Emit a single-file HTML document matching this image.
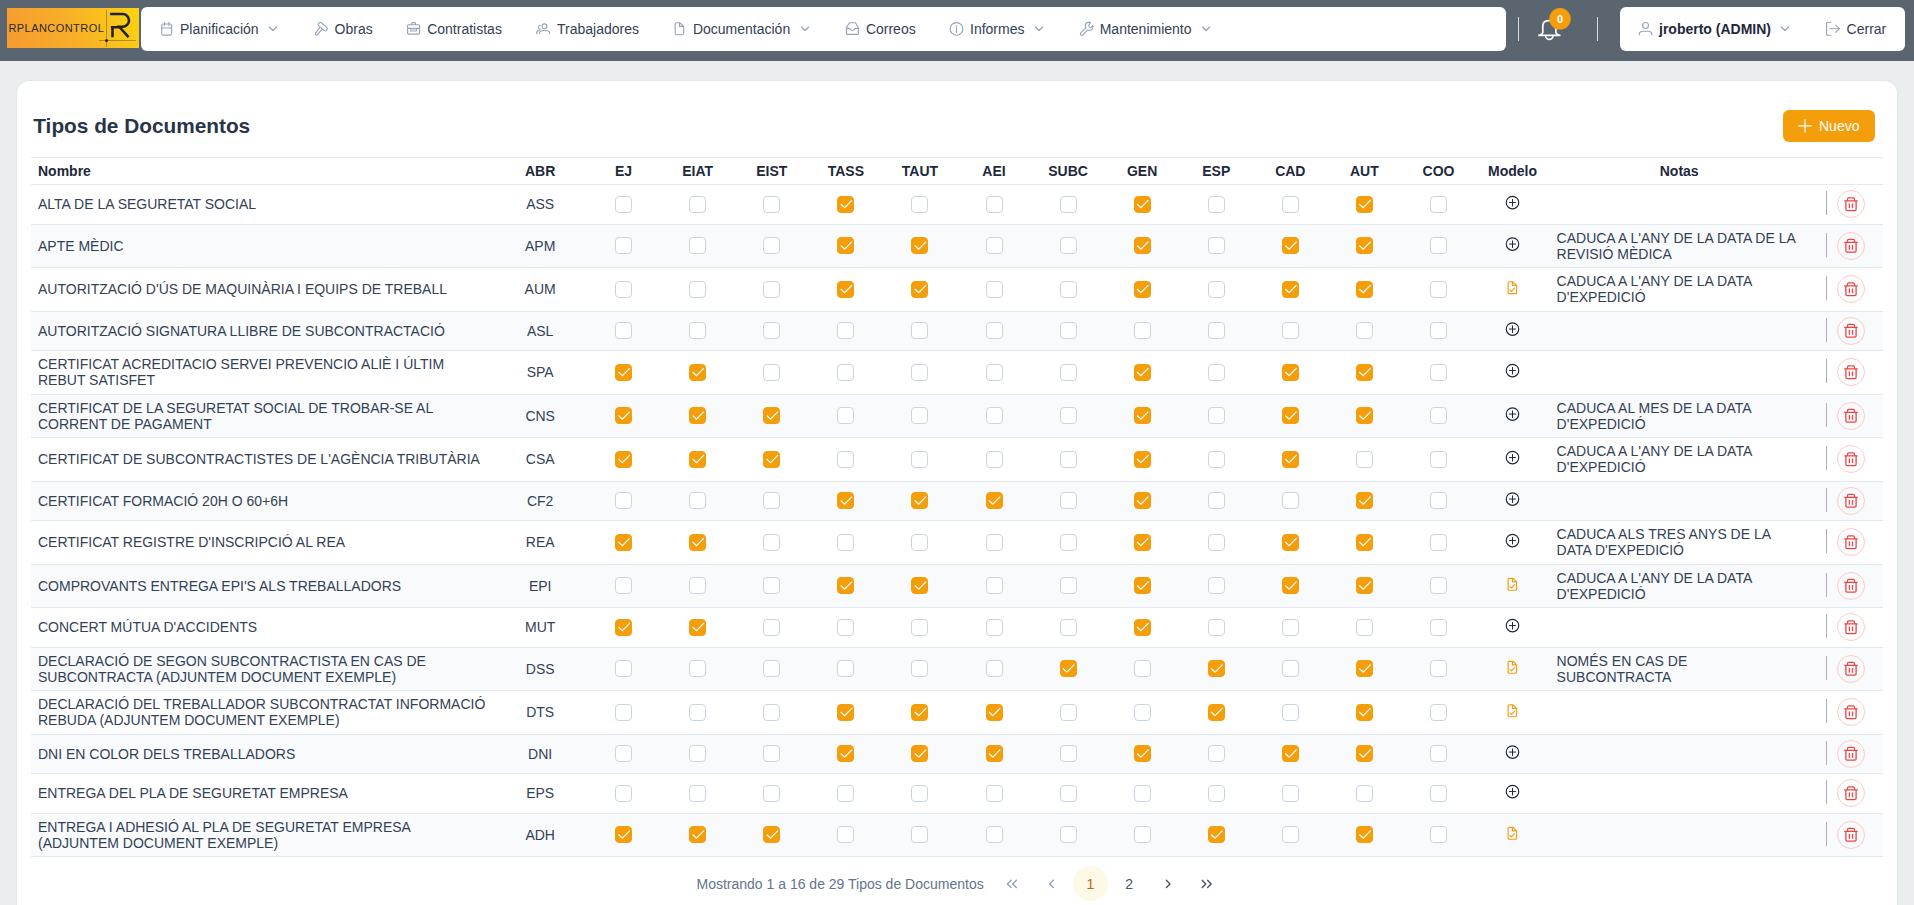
<!DOCTYPE html>
<html><head><meta charset="utf-8"><title>Tipos de Documentos</title>
<style>
*{box-sizing:border-box;margin:0;padding:0}
html,body{width:1914px;height:905px;overflow:hidden}
body{background:#eaeeef;font-family:"Liberation Sans",sans-serif;font-size:14px;color:#334155;position:relative}
.a{position:absolute}
.t{position:absolute;white-space:nowrap;line-height:16px}
svg{position:absolute;overflow:visible}
.nav{left:0;top:0;width:1914px;height:61px;background:#5b6570}
.box{background:#fff;border-radius:6px}
.card{left:17px;top:81px;width:1880px;height:900px;background:#fff;border-radius:12px;box-shadow:0 0 2px rgba(0,0,0,0.10)}
.hl{position:absolute;left:31px;width:1852px;height:1px;background:#e2e8f0}
.row{position:absolute;left:31px;width:1852px}
.st{background:#f8fafc}
.cb{position:absolute;width:17px;height:17px;border:1px solid #cbd5e1;border-radius:4px;background:#fff}
.cb.on{background:#f59e0b;border-color:#f59e0b}
.th{font-weight:bold;color:#1e293b}
</style></head><body>

<div class="a nav"></div>
<div class="a" style="left:7px;top:8px;width:132px;height:40px;background:linear-gradient(65deg,#f59a30 0%,#f8ad2a 45%,#fdd410 100%)">
<div class="t" style="left:1.4px;top:13px;font-size:11px;letter-spacing:0.45px;color:#2a2a2a;line-height:14px">RPLANCONTROL</div>
<div class="a" style="left:99px;top:2px;width:1px;height:37px;background:rgba(40,40,40,0.35)"></div>
<div class="a" style="left:92px;top:32px;width:37px;height:1px;background:rgba(40,40,40,0.35)"></div>
<div class="a" style="left:98.3px;top:31.2px;width:3px;height:3px;border-radius:50%;background:#222"></div>
<svg style="left:0;top:0" width="132" height="40"><path d="M103 6 H115.6 A6.4 6.4 0 0 1 115.6 18.8 H110 M103.9 19.2 H112.5 M105.5 18.2 V29.2 M113 19.6 L121.6 29.2" fill="none" stroke="#222" stroke-width="2.6"/></svg>
</div>
<div class="a box" style="left:141px;top:7px;width:1365px;height:44px"></div>
<div class="t" style="left:180px;top:21px;color:#334155">Planificación</div>
<div class="t" style="left:334.6px;top:21px;color:#334155">Obras</div>
<div class="t" style="left:427.2px;top:21px;color:#334155">Contratistas</div>
<div class="t" style="left:557px;top:21px;color:#334155">Trabajadores</div>
<div class="t" style="left:692.9px;top:21px;color:#334155">Documentación</div>
<div class="t" style="left:865.9px;top:21px;color:#334155">Correos</div>
<div class="t" style="left:970px;top:21px;color:#334155">Informes</div>
<div class="t" style="left:1099.7px;top:21px;color:#334155">Mantenimiento</div>
<div class="a" style="left:1518px;top:17px;width:1px;height:24px;background:#d6dade"></div>
<div class="a" style="left:1597px;top:17px;width:1px;height:24px;background:#d6dade"></div>
<div class="a box" style="left:1620px;top:7px;width:285px;height:44px"></div>
<div class="t" style="left:1659px;top:21px;font-weight:bold;color:#1e293b">jroberto (ADMIN)</div>
<div class="t" style="left:1846.6px;top:21px;color:#334155">Cerrar</div>
<div class="a card"></div>
<div class="t" style="left:33.3px;top:114px;font-size:20.8px;line-height:24px;font-weight:bold;color:#283548">Tipos de Documentos</div>
<div class="a" style="left:1783px;top:110px;width:92px;height:32px;border-radius:6px;background:#f59e0b"></div>
<div class="t" style="left:1819px;top:118px;color:#fff">Nuevo</div>
<div class="hl" style="top:157px"></div>
<div class="hl" style="top:184px"></div>
<div class="t th" style="left:38px;top:163.2px">Nombre</div>
<div class="t th" style="left:493.8px;width:92.76px;text-align:center;top:163.2px">ABR</div>
<div class="t th" style="left:586.56px;width:74.08px;text-align:center;top:163.2px">EJ</div>
<div class="t th" style="left:660.64px;width:74.08px;text-align:center;top:163.2px">EIAT</div>
<div class="t th" style="left:734.72px;width:74.08px;text-align:center;top:163.2px">EIST</div>
<div class="t th" style="left:808.80px;width:74.08px;text-align:center;top:163.2px">TASS</div>
<div class="t th" style="left:882.88px;width:74.08px;text-align:center;top:163.2px">TAUT</div>
<div class="t th" style="left:956.96px;width:74.08px;text-align:center;top:163.2px">AEI</div>
<div class="t th" style="left:1031.04px;width:74.08px;text-align:center;top:163.2px">SUBC</div>
<div class="t th" style="left:1105.12px;width:74.08px;text-align:center;top:163.2px">GEN</div>
<div class="t th" style="left:1179.20px;width:74.08px;text-align:center;top:163.2px">ESP</div>
<div class="t th" style="left:1253.28px;width:74.08px;text-align:center;top:163.2px">CAD</div>
<div class="t th" style="left:1327.36px;width:74.08px;text-align:center;top:163.2px">AUT</div>
<div class="t th" style="left:1401.44px;width:74.08px;text-align:center;top:163.2px">COO</div>
<div class="t th" style="left:1475.52px;width:74.08px;text-align:center;top:163.2px">Modelo</div>
<div class="t th" style="left:1549.6px;width:259.2px;text-align:center;top:163.2px">Notas</div>
<div class="hl" style="top:224px"></div>
<div class="t" style="left:38px;top:196.15px">ALTA DE LA SEGURETAT SOCIAL</div>
<div class="t" style="left:493.8px;width:92.76px;text-align:center;top:196.15px">ASS</div>
<div class="cb" style="left:615.10px;top:195.65px"></div>
<div class="cb" style="left:689.18px;top:195.65px"></div>
<div class="cb" style="left:763.26px;top:195.65px"></div>
<div class="cb on" style="left:837.34px;top:195.65px"></div>
<div class="cb" style="left:911.42px;top:195.65px"></div>
<div class="cb" style="left:985.50px;top:195.65px"></div>
<div class="cb" style="left:1059.58px;top:195.65px"></div>
<div class="cb on" style="left:1133.66px;top:195.65px"></div>
<div class="cb" style="left:1207.74px;top:195.65px"></div>
<div class="cb" style="left:1281.82px;top:195.65px"></div>
<div class="cb on" style="left:1355.90px;top:195.65px"></div>
<div class="cb" style="left:1429.98px;top:195.65px"></div>
<div class="a" style="left:1826px;top:191.15px;width:1px;height:24px;background:#b0b0b0"></div>
<div class="a" style="left:1836.80px;top:190.15px;width:28px;height:28px;border-radius:50%;border:1px solid #fecaca"></div>
<div class="row st" style="top:225px;height:42px"></div>
<div class="hl" style="top:267px"></div>
<div class="t" style="left:38px;top:237.65px">APTE MÈDIC</div>
<div class="t" style="left:493.8px;width:92.76px;text-align:center;top:237.65px">APM</div>
<div class="cb" style="left:615.10px;top:237.15px"></div>
<div class="cb" style="left:689.18px;top:237.15px"></div>
<div class="cb" style="left:763.26px;top:237.15px"></div>
<div class="cb on" style="left:837.34px;top:237.15px"></div>
<div class="cb on" style="left:911.42px;top:237.15px"></div>
<div class="cb" style="left:985.50px;top:237.15px"></div>
<div class="cb" style="left:1059.58px;top:237.15px"></div>
<div class="cb on" style="left:1133.66px;top:237.15px"></div>
<div class="cb" style="left:1207.74px;top:237.15px"></div>
<div class="cb on" style="left:1281.82px;top:237.15px"></div>
<div class="cb on" style="left:1355.90px;top:237.15px"></div>
<div class="cb" style="left:1429.98px;top:237.15px"></div>
<div class="t" style="left:1556.6px;top:229.65px">CADUCA A L'ANY DE LA DATA DE LA<br>REVISIÓ MÈDICA</div>
<div class="a" style="left:1826px;top:232.65px;width:1px;height:24px;background:#b0b0b0"></div>
<div class="a" style="left:1836.80px;top:231.65px;width:28px;height:28px;border-radius:50%;border:1px solid #fecaca"></div>
<div class="hl" style="top:311px"></div>
<div class="t" style="left:38px;top:281.15px">AUTORITZACIÓ D'ÚS DE MAQUINÀRIA I EQUIPS DE TREBALL</div>
<div class="t" style="left:493.8px;width:92.76px;text-align:center;top:281.15px">AUM</div>
<div class="cb" style="left:615.10px;top:280.65px"></div>
<div class="cb" style="left:689.18px;top:280.65px"></div>
<div class="cb" style="left:763.26px;top:280.65px"></div>
<div class="cb on" style="left:837.34px;top:280.65px"></div>
<div class="cb on" style="left:911.42px;top:280.65px"></div>
<div class="cb" style="left:985.50px;top:280.65px"></div>
<div class="cb" style="left:1059.58px;top:280.65px"></div>
<div class="cb on" style="left:1133.66px;top:280.65px"></div>
<div class="cb" style="left:1207.74px;top:280.65px"></div>
<div class="cb on" style="left:1281.82px;top:280.65px"></div>
<div class="cb on" style="left:1355.90px;top:280.65px"></div>
<div class="cb" style="left:1429.98px;top:280.65px"></div>
<div class="t" style="left:1556.6px;top:273.15px">CADUCA A L'ANY DE LA DATA<br>D'EXPEDICIÓ</div>
<div class="a" style="left:1826px;top:276.15px;width:1px;height:24px;background:#b0b0b0"></div>
<div class="a" style="left:1836.80px;top:275.15px;width:28px;height:28px;border-radius:50%;border:1px solid #fecaca"></div>
<div class="row st" style="top:312px;height:38px"></div>
<div class="hl" style="top:350px"></div>
<div class="t" style="left:38px;top:322.65px">AUTORITZACIÓ SIGNATURA LLIBRE DE SUBCONTRACTACIÓ</div>
<div class="t" style="left:493.8px;width:92.76px;text-align:center;top:322.65px">ASL</div>
<div class="cb" style="left:615.10px;top:322.15px"></div>
<div class="cb" style="left:689.18px;top:322.15px"></div>
<div class="cb" style="left:763.26px;top:322.15px"></div>
<div class="cb" style="left:837.34px;top:322.15px"></div>
<div class="cb" style="left:911.42px;top:322.15px"></div>
<div class="cb" style="left:985.50px;top:322.15px"></div>
<div class="cb" style="left:1059.58px;top:322.15px"></div>
<div class="cb" style="left:1133.66px;top:322.15px"></div>
<div class="cb" style="left:1207.74px;top:322.15px"></div>
<div class="cb" style="left:1281.82px;top:322.15px"></div>
<div class="cb" style="left:1355.90px;top:322.15px"></div>
<div class="cb" style="left:1429.98px;top:322.15px"></div>
<div class="a" style="left:1826px;top:317.65px;width:1px;height:24px;background:#b0b0b0"></div>
<div class="a" style="left:1836.80px;top:316.65px;width:28px;height:28px;border-radius:50%;border:1px solid #fecaca"></div>
<div class="hl" style="top:394px"></div>
<div class="t" style="left:38px;top:356.15px">CERTIFICAT ACREDITACIO SERVEI PREVENCIO ALIÈ I ÚLTIM<br>REBUT SATISFET</div>
<div class="t" style="left:493.8px;width:92.76px;text-align:center;top:364.15px">SPA</div>
<div class="cb on" style="left:615.10px;top:363.65px"></div>
<div class="cb on" style="left:689.18px;top:363.65px"></div>
<div class="cb" style="left:763.26px;top:363.65px"></div>
<div class="cb" style="left:837.34px;top:363.65px"></div>
<div class="cb" style="left:911.42px;top:363.65px"></div>
<div class="cb" style="left:985.50px;top:363.65px"></div>
<div class="cb" style="left:1059.58px;top:363.65px"></div>
<div class="cb on" style="left:1133.66px;top:363.65px"></div>
<div class="cb" style="left:1207.74px;top:363.65px"></div>
<div class="cb on" style="left:1281.82px;top:363.65px"></div>
<div class="cb on" style="left:1355.90px;top:363.65px"></div>
<div class="cb" style="left:1429.98px;top:363.65px"></div>
<div class="a" style="left:1826px;top:359.15px;width:1px;height:24px;background:#b0b0b0"></div>
<div class="a" style="left:1836.80px;top:358.15px;width:28px;height:28px;border-radius:50%;border:1px solid #fecaca"></div>
<div class="row st" style="top:395px;height:42px"></div>
<div class="hl" style="top:437px"></div>
<div class="t" style="left:38px;top:399.65px">CERTIFICAT DE LA SEGURETAT SOCIAL DE TROBAR-SE AL<br>CORRENT DE PAGAMENT</div>
<div class="t" style="left:493.8px;width:92.76px;text-align:center;top:407.65px">CNS</div>
<div class="cb on" style="left:615.10px;top:407.15px"></div>
<div class="cb on" style="left:689.18px;top:407.15px"></div>
<div class="cb on" style="left:763.26px;top:407.15px"></div>
<div class="cb" style="left:837.34px;top:407.15px"></div>
<div class="cb" style="left:911.42px;top:407.15px"></div>
<div class="cb" style="left:985.50px;top:407.15px"></div>
<div class="cb" style="left:1059.58px;top:407.15px"></div>
<div class="cb on" style="left:1133.66px;top:407.15px"></div>
<div class="cb" style="left:1207.74px;top:407.15px"></div>
<div class="cb on" style="left:1281.82px;top:407.15px"></div>
<div class="cb on" style="left:1355.90px;top:407.15px"></div>
<div class="cb" style="left:1429.98px;top:407.15px"></div>
<div class="t" style="left:1556.6px;top:399.65px">CADUCA AL MES DE LA DATA<br>D'EXPEDICIÓ</div>
<div class="a" style="left:1826px;top:402.65px;width:1px;height:24px;background:#b0b0b0"></div>
<div class="a" style="left:1836.80px;top:401.65px;width:28px;height:28px;border-radius:50%;border:1px solid #fecaca"></div>
<div class="hl" style="top:481px"></div>
<div class="t" style="left:38px;top:451.15px">CERTIFICAT DE SUBCONTRACTISTES DE L'AGÈNCIA TRIBUTÀRIA</div>
<div class="t" style="left:493.8px;width:92.76px;text-align:center;top:451.15px">CSA</div>
<div class="cb on" style="left:615.10px;top:450.65px"></div>
<div class="cb on" style="left:689.18px;top:450.65px"></div>
<div class="cb on" style="left:763.26px;top:450.65px"></div>
<div class="cb" style="left:837.34px;top:450.65px"></div>
<div class="cb" style="left:911.42px;top:450.65px"></div>
<div class="cb" style="left:985.50px;top:450.65px"></div>
<div class="cb" style="left:1059.58px;top:450.65px"></div>
<div class="cb on" style="left:1133.66px;top:450.65px"></div>
<div class="cb" style="left:1207.74px;top:450.65px"></div>
<div class="cb on" style="left:1281.82px;top:450.65px"></div>
<div class="cb" style="left:1355.90px;top:450.65px"></div>
<div class="cb" style="left:1429.98px;top:450.65px"></div>
<div class="t" style="left:1556.6px;top:443.15px">CADUCA A L'ANY DE LA DATA<br>D'EXPEDICIÓ</div>
<div class="a" style="left:1826px;top:446.15px;width:1px;height:24px;background:#b0b0b0"></div>
<div class="a" style="left:1836.80px;top:445.15px;width:28px;height:28px;border-radius:50%;border:1px solid #fecaca"></div>
<div class="row st" style="top:482px;height:38px"></div>
<div class="hl" style="top:520px"></div>
<div class="t" style="left:38px;top:492.65px">CERTIFICAT FORMACIÓ 20H O 60+6H</div>
<div class="t" style="left:493.8px;width:92.76px;text-align:center;top:492.65px">CF2</div>
<div class="cb" style="left:615.10px;top:492.15px"></div>
<div class="cb" style="left:689.18px;top:492.15px"></div>
<div class="cb" style="left:763.26px;top:492.15px"></div>
<div class="cb on" style="left:837.34px;top:492.15px"></div>
<div class="cb on" style="left:911.42px;top:492.15px"></div>
<div class="cb on" style="left:985.50px;top:492.15px"></div>
<div class="cb" style="left:1059.58px;top:492.15px"></div>
<div class="cb on" style="left:1133.66px;top:492.15px"></div>
<div class="cb" style="left:1207.74px;top:492.15px"></div>
<div class="cb" style="left:1281.82px;top:492.15px"></div>
<div class="cb on" style="left:1355.90px;top:492.15px"></div>
<div class="cb" style="left:1429.98px;top:492.15px"></div>
<div class="a" style="left:1826px;top:487.65px;width:1px;height:24px;background:#b0b0b0"></div>
<div class="a" style="left:1836.80px;top:486.65px;width:28px;height:28px;border-radius:50%;border:1px solid #fecaca"></div>
<div class="hl" style="top:564px"></div>
<div class="t" style="left:38px;top:534.15px">CERTIFICAT REGISTRE D'INSCRIPCIÓ AL REA</div>
<div class="t" style="left:493.8px;width:92.76px;text-align:center;top:534.15px">REA</div>
<div class="cb on" style="left:615.10px;top:533.65px"></div>
<div class="cb on" style="left:689.18px;top:533.65px"></div>
<div class="cb" style="left:763.26px;top:533.65px"></div>
<div class="cb" style="left:837.34px;top:533.65px"></div>
<div class="cb" style="left:911.42px;top:533.65px"></div>
<div class="cb" style="left:985.50px;top:533.65px"></div>
<div class="cb" style="left:1059.58px;top:533.65px"></div>
<div class="cb on" style="left:1133.66px;top:533.65px"></div>
<div class="cb" style="left:1207.74px;top:533.65px"></div>
<div class="cb on" style="left:1281.82px;top:533.65px"></div>
<div class="cb on" style="left:1355.90px;top:533.65px"></div>
<div class="cb" style="left:1429.98px;top:533.65px"></div>
<div class="t" style="left:1556.6px;top:526.15px">CADUCA ALS TRES ANYS DE LA<br>DATA D'EXPEDICIÓ</div>
<div class="a" style="left:1826px;top:529.15px;width:1px;height:24px;background:#b0b0b0"></div>
<div class="a" style="left:1836.80px;top:528.15px;width:28px;height:28px;border-radius:50%;border:1px solid #fecaca"></div>
<div class="row st" style="top:565px;height:42px"></div>
<div class="hl" style="top:607px"></div>
<div class="t" style="left:38px;top:577.65px">COMPROVANTS ENTREGA EPI'S ALS TREBALLADORS</div>
<div class="t" style="left:493.8px;width:92.76px;text-align:center;top:577.65px">EPI</div>
<div class="cb" style="left:615.10px;top:577.15px"></div>
<div class="cb" style="left:689.18px;top:577.15px"></div>
<div class="cb" style="left:763.26px;top:577.15px"></div>
<div class="cb on" style="left:837.34px;top:577.15px"></div>
<div class="cb on" style="left:911.42px;top:577.15px"></div>
<div class="cb" style="left:985.50px;top:577.15px"></div>
<div class="cb" style="left:1059.58px;top:577.15px"></div>
<div class="cb on" style="left:1133.66px;top:577.15px"></div>
<div class="cb" style="left:1207.74px;top:577.15px"></div>
<div class="cb on" style="left:1281.82px;top:577.15px"></div>
<div class="cb on" style="left:1355.90px;top:577.15px"></div>
<div class="cb" style="left:1429.98px;top:577.15px"></div>
<div class="t" style="left:1556.6px;top:569.65px">CADUCA A L'ANY DE LA DATA<br>D'EXPEDICIÓ</div>
<div class="a" style="left:1826px;top:572.65px;width:1px;height:24px;background:#b0b0b0"></div>
<div class="a" style="left:1836.80px;top:571.65px;width:28px;height:28px;border-radius:50%;border:1px solid #fecaca"></div>
<div class="hl" style="top:647px"></div>
<div class="t" style="left:38px;top:619.15px">CONCERT MÚTUA D'ACCIDENTS</div>
<div class="t" style="left:493.8px;width:92.76px;text-align:center;top:619.15px">MUT</div>
<div class="cb on" style="left:615.10px;top:618.65px"></div>
<div class="cb on" style="left:689.18px;top:618.65px"></div>
<div class="cb" style="left:763.26px;top:618.65px"></div>
<div class="cb" style="left:837.34px;top:618.65px"></div>
<div class="cb" style="left:911.42px;top:618.65px"></div>
<div class="cb" style="left:985.50px;top:618.65px"></div>
<div class="cb" style="left:1059.58px;top:618.65px"></div>
<div class="cb on" style="left:1133.66px;top:618.65px"></div>
<div class="cb" style="left:1207.74px;top:618.65px"></div>
<div class="cb" style="left:1281.82px;top:618.65px"></div>
<div class="cb" style="left:1355.90px;top:618.65px"></div>
<div class="cb" style="left:1429.98px;top:618.65px"></div>
<div class="a" style="left:1826px;top:614.15px;width:1px;height:24px;background:#b0b0b0"></div>
<div class="a" style="left:1836.80px;top:613.15px;width:28px;height:28px;border-radius:50%;border:1px solid #fecaca"></div>
<div class="row st" style="top:648px;height:42px"></div>
<div class="hl" style="top:690px"></div>
<div class="t" style="left:38px;top:652.65px">DECLARACIÓ DE SEGON SUBCONTRACTISTA EN CAS DE<br>SUBCONTRACTA (ADJUNTEM DOCUMENT EXEMPLE)</div>
<div class="t" style="left:493.8px;width:92.76px;text-align:center;top:660.65px">DSS</div>
<div class="cb" style="left:615.10px;top:660.15px"></div>
<div class="cb" style="left:689.18px;top:660.15px"></div>
<div class="cb" style="left:763.26px;top:660.15px"></div>
<div class="cb" style="left:837.34px;top:660.15px"></div>
<div class="cb" style="left:911.42px;top:660.15px"></div>
<div class="cb" style="left:985.50px;top:660.15px"></div>
<div class="cb on" style="left:1059.58px;top:660.15px"></div>
<div class="cb" style="left:1133.66px;top:660.15px"></div>
<div class="cb on" style="left:1207.74px;top:660.15px"></div>
<div class="cb" style="left:1281.82px;top:660.15px"></div>
<div class="cb on" style="left:1355.90px;top:660.15px"></div>
<div class="cb" style="left:1429.98px;top:660.15px"></div>
<div class="t" style="left:1556.6px;top:652.65px">NOMÉS EN CAS DE<br>SUBCONTRACTA</div>
<div class="a" style="left:1826px;top:655.65px;width:1px;height:24px;background:#b0b0b0"></div>
<div class="a" style="left:1836.80px;top:654.65px;width:28px;height:28px;border-radius:50%;border:1px solid #fecaca"></div>
<div class="hl" style="top:734px"></div>
<div class="t" style="left:38px;top:696.15px">DECLARACIÓ DEL TREBALLADOR SUBCONTRACTAT INFORMACIÓ<br>REBUDA (ADJUNTEM DOCUMENT EXEMPLE)</div>
<div class="t" style="left:493.8px;width:92.76px;text-align:center;top:704.15px">DTS</div>
<div class="cb" style="left:615.10px;top:703.65px"></div>
<div class="cb" style="left:689.18px;top:703.65px"></div>
<div class="cb" style="left:763.26px;top:703.65px"></div>
<div class="cb on" style="left:837.34px;top:703.65px"></div>
<div class="cb on" style="left:911.42px;top:703.65px"></div>
<div class="cb on" style="left:985.50px;top:703.65px"></div>
<div class="cb" style="left:1059.58px;top:703.65px"></div>
<div class="cb" style="left:1133.66px;top:703.65px"></div>
<div class="cb on" style="left:1207.74px;top:703.65px"></div>
<div class="cb" style="left:1281.82px;top:703.65px"></div>
<div class="cb on" style="left:1355.90px;top:703.65px"></div>
<div class="cb" style="left:1429.98px;top:703.65px"></div>
<div class="a" style="left:1826px;top:699.15px;width:1px;height:24px;background:#b0b0b0"></div>
<div class="a" style="left:1836.80px;top:698.15px;width:28px;height:28px;border-radius:50%;border:1px solid #fecaca"></div>
<div class="row st" style="top:735px;height:38px"></div>
<div class="hl" style="top:773px"></div>
<div class="t" style="left:38px;top:745.65px">DNI EN COLOR DELS TREBALLADORS</div>
<div class="t" style="left:493.8px;width:92.76px;text-align:center;top:745.65px">DNI</div>
<div class="cb" style="left:615.10px;top:745.15px"></div>
<div class="cb" style="left:689.18px;top:745.15px"></div>
<div class="cb" style="left:763.26px;top:745.15px"></div>
<div class="cb on" style="left:837.34px;top:745.15px"></div>
<div class="cb on" style="left:911.42px;top:745.15px"></div>
<div class="cb on" style="left:985.50px;top:745.15px"></div>
<div class="cb" style="left:1059.58px;top:745.15px"></div>
<div class="cb on" style="left:1133.66px;top:745.15px"></div>
<div class="cb" style="left:1207.74px;top:745.15px"></div>
<div class="cb on" style="left:1281.82px;top:745.15px"></div>
<div class="cb on" style="left:1355.90px;top:745.15px"></div>
<div class="cb" style="left:1429.98px;top:745.15px"></div>
<div class="a" style="left:1826px;top:740.65px;width:1px;height:24px;background:#b0b0b0"></div>
<div class="a" style="left:1836.80px;top:739.65px;width:28px;height:28px;border-radius:50%;border:1px solid #fecaca"></div>
<div class="hl" style="top:813px"></div>
<div class="t" style="left:38px;top:785.15px">ENTREGA DEL PLA DE SEGURETAT EMPRESA</div>
<div class="t" style="left:493.8px;width:92.76px;text-align:center;top:785.15px">EPS</div>
<div class="cb" style="left:615.10px;top:784.65px"></div>
<div class="cb" style="left:689.18px;top:784.65px"></div>
<div class="cb" style="left:763.26px;top:784.65px"></div>
<div class="cb" style="left:837.34px;top:784.65px"></div>
<div class="cb" style="left:911.42px;top:784.65px"></div>
<div class="cb" style="left:985.50px;top:784.65px"></div>
<div class="cb" style="left:1059.58px;top:784.65px"></div>
<div class="cb" style="left:1133.66px;top:784.65px"></div>
<div class="cb" style="left:1207.74px;top:784.65px"></div>
<div class="cb" style="left:1281.82px;top:784.65px"></div>
<div class="cb" style="left:1355.90px;top:784.65px"></div>
<div class="cb" style="left:1429.98px;top:784.65px"></div>
<div class="a" style="left:1826px;top:780.15px;width:1px;height:24px;background:#b0b0b0"></div>
<div class="a" style="left:1836.80px;top:779.15px;width:28px;height:28px;border-radius:50%;border:1px solid #fecaca"></div>
<div class="row st" style="top:814px;height:42px"></div>
<div class="hl" style="top:856px"></div>
<div class="t" style="left:38px;top:818.65px">ENTREGA I ADHESIÓ AL PLA DE SEGURETAT EMPRESA<br>(ADJUNTEM DOCUMENT EXEMPLE)</div>
<div class="t" style="left:493.8px;width:92.76px;text-align:center;top:826.65px">ADH</div>
<div class="cb on" style="left:615.10px;top:826.15px"></div>
<div class="cb on" style="left:689.18px;top:826.15px"></div>
<div class="cb on" style="left:763.26px;top:826.15px"></div>
<div class="cb" style="left:837.34px;top:826.15px"></div>
<div class="cb" style="left:911.42px;top:826.15px"></div>
<div class="cb" style="left:985.50px;top:826.15px"></div>
<div class="cb" style="left:1059.58px;top:826.15px"></div>
<div class="cb" style="left:1133.66px;top:826.15px"></div>
<div class="cb on" style="left:1207.74px;top:826.15px"></div>
<div class="cb" style="left:1281.82px;top:826.15px"></div>
<div class="cb on" style="left:1355.90px;top:826.15px"></div>
<div class="cb" style="left:1429.98px;top:826.15px"></div>
<div class="a" style="left:1826px;top:821.65px;width:1px;height:24px;background:#b0b0b0"></div>
<div class="a" style="left:1836.80px;top:820.65px;width:28px;height:28px;border-radius:50%;border:1px solid #fecaca"></div>
<div class="t" style="left:696.5px;top:876px;color:#64748b">Mostrando 1 a 16 de 29 Tipos de Documentos</div>
<div class="a" style="left:1073px;top:866px;width:35px;height:35px;border-radius:50%;background:#fef9e6"></div>
<div class="t" style="left:1073px;width:35px;text-align:center;top:875.9px;color:#b8660b">1</div>
<div class="t" style="left:1111.7px;width:35px;text-align:center;top:875.9px;color:#475569">2</div>
<svg style="left:0;top:0;pointer-events:none" width="1914" height="905"><path d="M163.2 24 H170.1 A1.5 1.5 0 0 1 171.6 25.5 V33.6 A1.5 1.5 0 0 1 170.1 35.1 H163.2 A1.5 1.5 0 0 1 161.7 33.6 V25.5 A1.5 1.5 0 0 1 163.2 24 Z M161.7 28 H171.6 M164.4 22.3 V25.5 M168.9 22.3 V25.5" fill="none" stroke="#94a3b8" stroke-width="1.1" stroke-linejoin="round" stroke-linecap="round"/><path d="M269.4 27.1 L273 30.4 L276.6 27.1" fill="none" stroke="#94a3b8" stroke-width="1.3" stroke-linejoin="round" stroke-linecap="round"/><g transform="translate(322.7 26.6) rotate(41)"><rect x="-5.1" y="-2" width="10.2" height="4" rx="1.2" fill="none" stroke="#94a3b8" stroke-width="1.1"/><path d="M-1.3 2 V9.4 A1.3 1.3 0 0 0 1.3 9.4 V2" fill="none" stroke="#94a3b8" stroke-width="1.1"/></g><path d="M408.6 24.8 H418.6 A1 1 0 0 1 419.6 25.8 V33.1 A1 1 0 0 1 418.6 34.1 H408.6 A1 1 0 0 1 407.6 33.1 V25.8 A1 1 0 0 1 408.6 24.8 Z M411.7 24.8 V23.2 A0.6 0.6 0 0 1 412.3 22.6 H414.9 A0.6 0.6 0 0 1 415.5 23.2 V24.8 M407.6 28.4 H419.6 M410.9 28.4 V31 H416.4 V28.4" fill="none" stroke="#94a3b8" stroke-width="1.1" stroke-linejoin="round" stroke-linecap="round"/><rect x="411.2" y="28.6" width="4.8" height="2" fill="#cdd3dc"/><path d="M542.1 26.3 a2.4 2.4 0 1 0 4.8 0 a2.4 2.4 0 1 0 -4.8 0" fill="none" stroke="#94a3b8" stroke-width="1.1" stroke-linejoin="round" stroke-linecap="round"/><path d="M539.5 33.4 C539.5 31.2 541.5 30.5 544.5 30.5 C547.5 30.5 549.6 31.2 549.6 33.4" fill="none" stroke="#94a3b8" stroke-width="1.1" stroke-linejoin="round" stroke-linecap="round"/><path d="M540.4 25.3 A1.9 1.9 0 0 0 540.4 29.1 M536.6 33.4 C536.6 31.4 537.6 30.5 539.8 30.3" fill="none" stroke="#94a3b8" stroke-width="1.1" stroke-linejoin="round" stroke-linecap="round"/><path d="M676.4 22.8 H680 L683.7 26.5 V33.6 A1.2 1.2 0 0 1 682.5 34.8 H676.4 A1.2 1.2 0 0 1 675.2 33.6 V24 A1.2 1.2 0 0 1 676.4 22.8 Z M679.5 22.9 V26.4 H683.6" fill="none" stroke="#94a3b8" stroke-width="1.1" stroke-linejoin="round" stroke-linecap="round"/><path d="M801.4 27.1 L805 30.4 L808.6 27.1" fill="none" stroke="#94a3b8" stroke-width="1.3" stroke-linejoin="round" stroke-linecap="round"/><path d="M849.5 22.8 H855.4 L858.3 27.6 V33.4 A1 1 0 0 1 857.3 34.4 H847.4 A1 1 0 0 1 846.4 33.4 V27.6 Z M846.4 28.4 H849.6 C850.2 28.4 850.4 30.5 852.4 30.5 C854.4 30.5 854.6 28.4 855.2 28.4 H858.3" fill="none" stroke="#94a3b8" stroke-width="1.1" stroke-linejoin="round" stroke-linecap="round"/><circle cx="956.5" cy="28.9" r="6.3" fill="none" stroke="#94a3b8" stroke-width="1.1"/><path d="M956.5 25.9 V26.5 M956.5 27.9 V32.5" fill="none" stroke="#94a3b8" stroke-width="1.1" stroke-linejoin="round" stroke-linecap="round"/><path d="M1035.4 27.1 L1039 30.4 L1042.6 27.1" fill="none" stroke="#94a3b8" stroke-width="1.3" stroke-linejoin="round" stroke-linecap="round"/><path d="M1090.6 22.4 L1088.8 22.4 C1086.8 22.4 1085.4 24 1085.4 25.9 C1085.4 26.6 1085.6 27.3 1085.9 27.8 L1080.8 32.9 C1080.2 33.5 1080.2 34.3 1080.8 34.9 C1081.4 35.5 1082.2 35.5 1082.8 34.9 L1087.8 29.9 C1088.3 30.1 1088.9 30.3 1089.5 30.3 C1091.4 30.3 1093 28.7 1093 26.8 V25.4 L1090.8 27.6 C1089.8 27.6 1088.8 26.8 1088.8 25.8 C1088.8 25 1089.1 24 1090.6 22.4 Z" fill="none" stroke="#94a3b8" stroke-width="1.1" stroke-linejoin="round" stroke-linecap="round"/><path d="M1202.4 27.1 L1206 30.4 L1209.6 27.1" fill="none" stroke="#94a3b8" stroke-width="1.3" stroke-linejoin="round" stroke-linecap="round"/><path d="M1538.9 35.4 C1541 34.6 1542.8 34 1542.8 32.2 V25.6 C1542.8 22.2 1545.6 20.6 1549.35 20.6 C1553.1 20.6 1555.9 22.2 1555.9 25.6 V32.2 C1555.9 34 1557.7 34.6 1559.8 35.4 Z" fill="none" stroke="#fff" stroke-width="1.7" stroke-linejoin="round" stroke-linecap="round"/><path d="M1545.7 36 A3.65 3.4 0 0 0 1553 36" fill="none" stroke="#fff" stroke-width="1.6" stroke-linejoin="round" stroke-linecap="round"/><circle cx="1560" cy="18.8" r="10.75" fill="#f59e0b"/><circle cx="1645.5" cy="25.5" r="2.95" fill="none" stroke="#94a3b8" stroke-width="1.1"/><path d="M1639.2 35 V34.4 C1639.2 32.4 1640.8 31.3 1643 31.3 H1648 C1650.2 31.3 1651.8 32.4 1651.8 34.4 V35" fill="none" stroke="#94a3b8" stroke-width="1.1" stroke-linejoin="round" stroke-linecap="round"/><path d="M1781.4 27.1 L1785 30.4 L1788.6 27.1" fill="none" stroke="#94a3b8" stroke-width="1.3" stroke-linejoin="round" stroke-linecap="round"/><path d="M1830.8 22.3 H1827.6 A1 1 0 0 0 1826.6 23.3 V34.3 A1 1 0 0 0 1827.6 35.3 H1830.8 M1830 28.7 H1839.6 M1835.6 25.2 L1839.6 28.7 L1835.6 32.4" fill="none" stroke="#94a3b8" stroke-width="1.1" stroke-linejoin="round" stroke-linecap="round"/><path d="M1805 119.2 V132.6 M1798.3 125.9 H1811.7" fill="none" stroke="#fff" stroke-width="1.3" stroke-linejoin="round" stroke-linecap="butt"/><path d="M840.74 204.05 L844.64 207.65 L852.04 200.05" fill="none" stroke="#fff" stroke-width="1.2" stroke-linejoin="miter" stroke-linecap="butt"/><path d="M1137.06 204.05 L1140.96 207.65 L1148.36 200.05" fill="none" stroke="#fff" stroke-width="1.2" stroke-linejoin="miter" stroke-linecap="butt"/><path d="M1359.30 204.05 L1363.20 207.65 L1370.60 200.05" fill="none" stroke="#fff" stroke-width="1.2" stroke-linejoin="miter" stroke-linecap="butt"/><circle cx="1512.50" cy="202.55" r="6.25" fill="none" stroke="#1e293b" stroke-width="1.15"/><path d="M1512.50 198.95 V206.45 M1509.00 202.55 H1515.90" fill="none" stroke="#1e293b" stroke-width="1.0" stroke-linejoin="round" stroke-linecap="butt"/><path transform="translate(1838.00 191.55)" d="M6.2 9.4 H19.7 M9.5 9.4 V7.6 A1.2 1.2 0 0 1 10.7 6.4 H15.3 A1.2 1.2 0 0 1 16.5 7.6 V9.4 M7.9 9.4 V17.8 A1.2 1.2 0 0 0 9.1 19 H16.9 A1.2 1.2 0 0 0 18.1 17.8 V9.4 M11.4 12 V16.8 M14.5 12 V16.8" fill="none" stroke="#ef4444" stroke-width="1.3" stroke-linejoin="round" stroke-linecap="butt"/><path d="M840.74 245.55 L844.64 249.15 L852.04 241.55" fill="none" stroke="#fff" stroke-width="1.2" stroke-linejoin="miter" stroke-linecap="butt"/><path d="M914.82 245.55 L918.72 249.15 L926.12 241.55" fill="none" stroke="#fff" stroke-width="1.2" stroke-linejoin="miter" stroke-linecap="butt"/><path d="M1137.06 245.55 L1140.96 249.15 L1148.36 241.55" fill="none" stroke="#fff" stroke-width="1.2" stroke-linejoin="miter" stroke-linecap="butt"/><path d="M1285.22 245.55 L1289.12 249.15 L1296.52 241.55" fill="none" stroke="#fff" stroke-width="1.2" stroke-linejoin="miter" stroke-linecap="butt"/><path d="M1359.30 245.55 L1363.20 249.15 L1370.60 241.55" fill="none" stroke="#fff" stroke-width="1.2" stroke-linejoin="miter" stroke-linecap="butt"/><circle cx="1512.50" cy="244.05" r="6.25" fill="none" stroke="#1e293b" stroke-width="1.15"/><path d="M1512.50 240.45 V247.95 M1509.00 244.05 H1515.90" fill="none" stroke="#1e293b" stroke-width="1.0" stroke-linejoin="round" stroke-linecap="butt"/><path transform="translate(1838.00 233.05)" d="M6.2 9.4 H19.7 M9.5 9.4 V7.6 A1.2 1.2 0 0 1 10.7 6.4 H15.3 A1.2 1.2 0 0 1 16.5 7.6 V9.4 M7.9 9.4 V17.8 A1.2 1.2 0 0 0 9.1 19 H16.9 A1.2 1.2 0 0 0 18.1 17.8 V9.4 M11.4 12 V16.8 M14.5 12 V16.8" fill="none" stroke="#ef4444" stroke-width="1.3" stroke-linejoin="round" stroke-linecap="butt"/><path d="M840.74 289.05 L844.64 292.65 L852.04 285.05" fill="none" stroke="#fff" stroke-width="1.2" stroke-linejoin="miter" stroke-linecap="butt"/><path d="M914.82 289.05 L918.72 292.65 L926.12 285.05" fill="none" stroke="#fff" stroke-width="1.2" stroke-linejoin="miter" stroke-linecap="butt"/><path d="M1137.06 289.05 L1140.96 292.65 L1148.36 285.05" fill="none" stroke="#fff" stroke-width="1.2" stroke-linejoin="miter" stroke-linecap="butt"/><path d="M1285.22 289.05 L1289.12 292.65 L1296.52 285.05" fill="none" stroke="#fff" stroke-width="1.2" stroke-linejoin="miter" stroke-linecap="butt"/><path d="M1359.30 289.05 L1363.20 292.65 L1370.60 285.05" fill="none" stroke="#fff" stroke-width="1.2" stroke-linejoin="miter" stroke-linecap="butt"/><path transform="translate(1500.00 275.90)" d="M9.4 5.9 H13 L16.6 9.5 V16.5 A1.3 1.3 0 0 1 15.3 17.8 H9.4 A1.3 1.3 0 0 1 8.1 16.5 V7.2 A1.3 1.3 0 0 1 9.4 5.9 Z M12.5 6 V9.5 H16.5 M9.9 14.3 L11.4 15.4 L14.6 12.3" fill="none" stroke="#f39c12" stroke-width="1.15" stroke-linejoin="round" stroke-linecap="round"/><path transform="translate(1838.00 276.55)" d="M6.2 9.4 H19.7 M9.5 9.4 V7.6 A1.2 1.2 0 0 1 10.7 6.4 H15.3 A1.2 1.2 0 0 1 16.5 7.6 V9.4 M7.9 9.4 V17.8 A1.2 1.2 0 0 0 9.1 19 H16.9 A1.2 1.2 0 0 0 18.1 17.8 V9.4 M11.4 12 V16.8 M14.5 12 V16.8" fill="none" stroke="#ef4444" stroke-width="1.3" stroke-linejoin="round" stroke-linecap="butt"/><circle cx="1512.50" cy="329.05" r="6.25" fill="none" stroke="#1e293b" stroke-width="1.15"/><path d="M1512.50 325.45 V332.95 M1509.00 329.05 H1515.90" fill="none" stroke="#1e293b" stroke-width="1.0" stroke-linejoin="round" stroke-linecap="butt"/><path transform="translate(1838.00 318.05)" d="M6.2 9.4 H19.7 M9.5 9.4 V7.6 A1.2 1.2 0 0 1 10.7 6.4 H15.3 A1.2 1.2 0 0 1 16.5 7.6 V9.4 M7.9 9.4 V17.8 A1.2 1.2 0 0 0 9.1 19 H16.9 A1.2 1.2 0 0 0 18.1 17.8 V9.4 M11.4 12 V16.8 M14.5 12 V16.8" fill="none" stroke="#ef4444" stroke-width="1.3" stroke-linejoin="round" stroke-linecap="butt"/><path d="M618.50 372.05 L622.40 375.65 L629.80 368.05" fill="none" stroke="#fff" stroke-width="1.2" stroke-linejoin="miter" stroke-linecap="butt"/><path d="M692.58 372.05 L696.48 375.65 L703.88 368.05" fill="none" stroke="#fff" stroke-width="1.2" stroke-linejoin="miter" stroke-linecap="butt"/><path d="M1137.06 372.05 L1140.96 375.65 L1148.36 368.05" fill="none" stroke="#fff" stroke-width="1.2" stroke-linejoin="miter" stroke-linecap="butt"/><path d="M1285.22 372.05 L1289.12 375.65 L1296.52 368.05" fill="none" stroke="#fff" stroke-width="1.2" stroke-linejoin="miter" stroke-linecap="butt"/><path d="M1359.30 372.05 L1363.20 375.65 L1370.60 368.05" fill="none" stroke="#fff" stroke-width="1.2" stroke-linejoin="miter" stroke-linecap="butt"/><circle cx="1512.50" cy="370.55" r="6.25" fill="none" stroke="#1e293b" stroke-width="1.15"/><path d="M1512.50 366.95 V374.45 M1509.00 370.55 H1515.90" fill="none" stroke="#1e293b" stroke-width="1.0" stroke-linejoin="round" stroke-linecap="butt"/><path transform="translate(1838.00 359.55)" d="M6.2 9.4 H19.7 M9.5 9.4 V7.6 A1.2 1.2 0 0 1 10.7 6.4 H15.3 A1.2 1.2 0 0 1 16.5 7.6 V9.4 M7.9 9.4 V17.8 A1.2 1.2 0 0 0 9.1 19 H16.9 A1.2 1.2 0 0 0 18.1 17.8 V9.4 M11.4 12 V16.8 M14.5 12 V16.8" fill="none" stroke="#ef4444" stroke-width="1.3" stroke-linejoin="round" stroke-linecap="butt"/><path d="M618.50 415.55 L622.40 419.15 L629.80 411.55" fill="none" stroke="#fff" stroke-width="1.2" stroke-linejoin="miter" stroke-linecap="butt"/><path d="M692.58 415.55 L696.48 419.15 L703.88 411.55" fill="none" stroke="#fff" stroke-width="1.2" stroke-linejoin="miter" stroke-linecap="butt"/><path d="M766.66 415.55 L770.56 419.15 L777.96 411.55" fill="none" stroke="#fff" stroke-width="1.2" stroke-linejoin="miter" stroke-linecap="butt"/><path d="M1137.06 415.55 L1140.96 419.15 L1148.36 411.55" fill="none" stroke="#fff" stroke-width="1.2" stroke-linejoin="miter" stroke-linecap="butt"/><path d="M1285.22 415.55 L1289.12 419.15 L1296.52 411.55" fill="none" stroke="#fff" stroke-width="1.2" stroke-linejoin="miter" stroke-linecap="butt"/><path d="M1359.30 415.55 L1363.20 419.15 L1370.60 411.55" fill="none" stroke="#fff" stroke-width="1.2" stroke-linejoin="miter" stroke-linecap="butt"/><circle cx="1512.50" cy="414.05" r="6.25" fill="none" stroke="#1e293b" stroke-width="1.15"/><path d="M1512.50 410.45 V417.95 M1509.00 414.05 H1515.90" fill="none" stroke="#1e293b" stroke-width="1.0" stroke-linejoin="round" stroke-linecap="butt"/><path transform="translate(1838.00 403.05)" d="M6.2 9.4 H19.7 M9.5 9.4 V7.6 A1.2 1.2 0 0 1 10.7 6.4 H15.3 A1.2 1.2 0 0 1 16.5 7.6 V9.4 M7.9 9.4 V17.8 A1.2 1.2 0 0 0 9.1 19 H16.9 A1.2 1.2 0 0 0 18.1 17.8 V9.4 M11.4 12 V16.8 M14.5 12 V16.8" fill="none" stroke="#ef4444" stroke-width="1.3" stroke-linejoin="round" stroke-linecap="butt"/><path d="M618.50 459.05 L622.40 462.65 L629.80 455.05" fill="none" stroke="#fff" stroke-width="1.2" stroke-linejoin="miter" stroke-linecap="butt"/><path d="M692.58 459.05 L696.48 462.65 L703.88 455.05" fill="none" stroke="#fff" stroke-width="1.2" stroke-linejoin="miter" stroke-linecap="butt"/><path d="M766.66 459.05 L770.56 462.65 L777.96 455.05" fill="none" stroke="#fff" stroke-width="1.2" stroke-linejoin="miter" stroke-linecap="butt"/><path d="M1137.06 459.05 L1140.96 462.65 L1148.36 455.05" fill="none" stroke="#fff" stroke-width="1.2" stroke-linejoin="miter" stroke-linecap="butt"/><path d="M1285.22 459.05 L1289.12 462.65 L1296.52 455.05" fill="none" stroke="#fff" stroke-width="1.2" stroke-linejoin="miter" stroke-linecap="butt"/><circle cx="1512.50" cy="457.55" r="6.25" fill="none" stroke="#1e293b" stroke-width="1.15"/><path d="M1512.50 453.95 V461.45 M1509.00 457.55 H1515.90" fill="none" stroke="#1e293b" stroke-width="1.0" stroke-linejoin="round" stroke-linecap="butt"/><path transform="translate(1838.00 446.55)" d="M6.2 9.4 H19.7 M9.5 9.4 V7.6 A1.2 1.2 0 0 1 10.7 6.4 H15.3 A1.2 1.2 0 0 1 16.5 7.6 V9.4 M7.9 9.4 V17.8 A1.2 1.2 0 0 0 9.1 19 H16.9 A1.2 1.2 0 0 0 18.1 17.8 V9.4 M11.4 12 V16.8 M14.5 12 V16.8" fill="none" stroke="#ef4444" stroke-width="1.3" stroke-linejoin="round" stroke-linecap="butt"/><path d="M840.74 500.55 L844.64 504.15 L852.04 496.55" fill="none" stroke="#fff" stroke-width="1.2" stroke-linejoin="miter" stroke-linecap="butt"/><path d="M914.82 500.55 L918.72 504.15 L926.12 496.55" fill="none" stroke="#fff" stroke-width="1.2" stroke-linejoin="miter" stroke-linecap="butt"/><path d="M988.90 500.55 L992.80 504.15 L1000.20 496.55" fill="none" stroke="#fff" stroke-width="1.2" stroke-linejoin="miter" stroke-linecap="butt"/><path d="M1137.06 500.55 L1140.96 504.15 L1148.36 496.55" fill="none" stroke="#fff" stroke-width="1.2" stroke-linejoin="miter" stroke-linecap="butt"/><path d="M1359.30 500.55 L1363.20 504.15 L1370.60 496.55" fill="none" stroke="#fff" stroke-width="1.2" stroke-linejoin="miter" stroke-linecap="butt"/><circle cx="1512.50" cy="499.05" r="6.25" fill="none" stroke="#1e293b" stroke-width="1.15"/><path d="M1512.50 495.45 V502.95 M1509.00 499.05 H1515.90" fill="none" stroke="#1e293b" stroke-width="1.0" stroke-linejoin="round" stroke-linecap="butt"/><path transform="translate(1838.00 488.05)" d="M6.2 9.4 H19.7 M9.5 9.4 V7.6 A1.2 1.2 0 0 1 10.7 6.4 H15.3 A1.2 1.2 0 0 1 16.5 7.6 V9.4 M7.9 9.4 V17.8 A1.2 1.2 0 0 0 9.1 19 H16.9 A1.2 1.2 0 0 0 18.1 17.8 V9.4 M11.4 12 V16.8 M14.5 12 V16.8" fill="none" stroke="#ef4444" stroke-width="1.3" stroke-linejoin="round" stroke-linecap="butt"/><path d="M618.50 542.05 L622.40 545.65 L629.80 538.05" fill="none" stroke="#fff" stroke-width="1.2" stroke-linejoin="miter" stroke-linecap="butt"/><path d="M692.58 542.05 L696.48 545.65 L703.88 538.05" fill="none" stroke="#fff" stroke-width="1.2" stroke-linejoin="miter" stroke-linecap="butt"/><path d="M1137.06 542.05 L1140.96 545.65 L1148.36 538.05" fill="none" stroke="#fff" stroke-width="1.2" stroke-linejoin="miter" stroke-linecap="butt"/><path d="M1285.22 542.05 L1289.12 545.65 L1296.52 538.05" fill="none" stroke="#fff" stroke-width="1.2" stroke-linejoin="miter" stroke-linecap="butt"/><path d="M1359.30 542.05 L1363.20 545.65 L1370.60 538.05" fill="none" stroke="#fff" stroke-width="1.2" stroke-linejoin="miter" stroke-linecap="butt"/><circle cx="1512.50" cy="540.55" r="6.25" fill="none" stroke="#1e293b" stroke-width="1.15"/><path d="M1512.50 536.95 V544.45 M1509.00 540.55 H1515.90" fill="none" stroke="#1e293b" stroke-width="1.0" stroke-linejoin="round" stroke-linecap="butt"/><path transform="translate(1838.00 529.55)" d="M6.2 9.4 H19.7 M9.5 9.4 V7.6 A1.2 1.2 0 0 1 10.7 6.4 H15.3 A1.2 1.2 0 0 1 16.5 7.6 V9.4 M7.9 9.4 V17.8 A1.2 1.2 0 0 0 9.1 19 H16.9 A1.2 1.2 0 0 0 18.1 17.8 V9.4 M11.4 12 V16.8 M14.5 12 V16.8" fill="none" stroke="#ef4444" stroke-width="1.3" stroke-linejoin="round" stroke-linecap="butt"/><path d="M840.74 585.55 L844.64 589.15 L852.04 581.55" fill="none" stroke="#fff" stroke-width="1.2" stroke-linejoin="miter" stroke-linecap="butt"/><path d="M914.82 585.55 L918.72 589.15 L926.12 581.55" fill="none" stroke="#fff" stroke-width="1.2" stroke-linejoin="miter" stroke-linecap="butt"/><path d="M1137.06 585.55 L1140.96 589.15 L1148.36 581.55" fill="none" stroke="#fff" stroke-width="1.2" stroke-linejoin="miter" stroke-linecap="butt"/><path d="M1285.22 585.55 L1289.12 589.15 L1296.52 581.55" fill="none" stroke="#fff" stroke-width="1.2" stroke-linejoin="miter" stroke-linecap="butt"/><path d="M1359.30 585.55 L1363.20 589.15 L1370.60 581.55" fill="none" stroke="#fff" stroke-width="1.2" stroke-linejoin="miter" stroke-linecap="butt"/><path transform="translate(1500.00 572.40)" d="M9.4 5.9 H13 L16.6 9.5 V16.5 A1.3 1.3 0 0 1 15.3 17.8 H9.4 A1.3 1.3 0 0 1 8.1 16.5 V7.2 A1.3 1.3 0 0 1 9.4 5.9 Z M12.5 6 V9.5 H16.5 M9.9 14.3 L11.4 15.4 L14.6 12.3" fill="none" stroke="#f39c12" stroke-width="1.15" stroke-linejoin="round" stroke-linecap="round"/><path transform="translate(1838.00 573.05)" d="M6.2 9.4 H19.7 M9.5 9.4 V7.6 A1.2 1.2 0 0 1 10.7 6.4 H15.3 A1.2 1.2 0 0 1 16.5 7.6 V9.4 M7.9 9.4 V17.8 A1.2 1.2 0 0 0 9.1 19 H16.9 A1.2 1.2 0 0 0 18.1 17.8 V9.4 M11.4 12 V16.8 M14.5 12 V16.8" fill="none" stroke="#ef4444" stroke-width="1.3" stroke-linejoin="round" stroke-linecap="butt"/><path d="M618.50 627.05 L622.40 630.65 L629.80 623.05" fill="none" stroke="#fff" stroke-width="1.2" stroke-linejoin="miter" stroke-linecap="butt"/><path d="M692.58 627.05 L696.48 630.65 L703.88 623.05" fill="none" stroke="#fff" stroke-width="1.2" stroke-linejoin="miter" stroke-linecap="butt"/><path d="M1137.06 627.05 L1140.96 630.65 L1148.36 623.05" fill="none" stroke="#fff" stroke-width="1.2" stroke-linejoin="miter" stroke-linecap="butt"/><circle cx="1512.50" cy="625.55" r="6.25" fill="none" stroke="#1e293b" stroke-width="1.15"/><path d="M1512.50 621.95 V629.45 M1509.00 625.55 H1515.90" fill="none" stroke="#1e293b" stroke-width="1.0" stroke-linejoin="round" stroke-linecap="butt"/><path transform="translate(1838.00 614.55)" d="M6.2 9.4 H19.7 M9.5 9.4 V7.6 A1.2 1.2 0 0 1 10.7 6.4 H15.3 A1.2 1.2 0 0 1 16.5 7.6 V9.4 M7.9 9.4 V17.8 A1.2 1.2 0 0 0 9.1 19 H16.9 A1.2 1.2 0 0 0 18.1 17.8 V9.4 M11.4 12 V16.8 M14.5 12 V16.8" fill="none" stroke="#ef4444" stroke-width="1.3" stroke-linejoin="round" stroke-linecap="butt"/><path d="M1062.98 668.55 L1066.88 672.15 L1074.28 664.55" fill="none" stroke="#fff" stroke-width="1.2" stroke-linejoin="miter" stroke-linecap="butt"/><path d="M1211.14 668.55 L1215.04 672.15 L1222.44 664.55" fill="none" stroke="#fff" stroke-width="1.2" stroke-linejoin="miter" stroke-linecap="butt"/><path d="M1359.30 668.55 L1363.20 672.15 L1370.60 664.55" fill="none" stroke="#fff" stroke-width="1.2" stroke-linejoin="miter" stroke-linecap="butt"/><path transform="translate(1500.00 655.40)" d="M9.4 5.9 H13 L16.6 9.5 V16.5 A1.3 1.3 0 0 1 15.3 17.8 H9.4 A1.3 1.3 0 0 1 8.1 16.5 V7.2 A1.3 1.3 0 0 1 9.4 5.9 Z M12.5 6 V9.5 H16.5 M9.9 14.3 L11.4 15.4 L14.6 12.3" fill="none" stroke="#f39c12" stroke-width="1.15" stroke-linejoin="round" stroke-linecap="round"/><path transform="translate(1838.00 656.05)" d="M6.2 9.4 H19.7 M9.5 9.4 V7.6 A1.2 1.2 0 0 1 10.7 6.4 H15.3 A1.2 1.2 0 0 1 16.5 7.6 V9.4 M7.9 9.4 V17.8 A1.2 1.2 0 0 0 9.1 19 H16.9 A1.2 1.2 0 0 0 18.1 17.8 V9.4 M11.4 12 V16.8 M14.5 12 V16.8" fill="none" stroke="#ef4444" stroke-width="1.3" stroke-linejoin="round" stroke-linecap="butt"/><path d="M840.74 712.05 L844.64 715.65 L852.04 708.05" fill="none" stroke="#fff" stroke-width="1.2" stroke-linejoin="miter" stroke-linecap="butt"/><path d="M914.82 712.05 L918.72 715.65 L926.12 708.05" fill="none" stroke="#fff" stroke-width="1.2" stroke-linejoin="miter" stroke-linecap="butt"/><path d="M988.90 712.05 L992.80 715.65 L1000.20 708.05" fill="none" stroke="#fff" stroke-width="1.2" stroke-linejoin="miter" stroke-linecap="butt"/><path d="M1211.14 712.05 L1215.04 715.65 L1222.44 708.05" fill="none" stroke="#fff" stroke-width="1.2" stroke-linejoin="miter" stroke-linecap="butt"/><path d="M1359.30 712.05 L1363.20 715.65 L1370.60 708.05" fill="none" stroke="#fff" stroke-width="1.2" stroke-linejoin="miter" stroke-linecap="butt"/><path transform="translate(1500.00 698.90)" d="M9.4 5.9 H13 L16.6 9.5 V16.5 A1.3 1.3 0 0 1 15.3 17.8 H9.4 A1.3 1.3 0 0 1 8.1 16.5 V7.2 A1.3 1.3 0 0 1 9.4 5.9 Z M12.5 6 V9.5 H16.5 M9.9 14.3 L11.4 15.4 L14.6 12.3" fill="none" stroke="#f39c12" stroke-width="1.15" stroke-linejoin="round" stroke-linecap="round"/><path transform="translate(1838.00 699.55)" d="M6.2 9.4 H19.7 M9.5 9.4 V7.6 A1.2 1.2 0 0 1 10.7 6.4 H15.3 A1.2 1.2 0 0 1 16.5 7.6 V9.4 M7.9 9.4 V17.8 A1.2 1.2 0 0 0 9.1 19 H16.9 A1.2 1.2 0 0 0 18.1 17.8 V9.4 M11.4 12 V16.8 M14.5 12 V16.8" fill="none" stroke="#ef4444" stroke-width="1.3" stroke-linejoin="round" stroke-linecap="butt"/><path d="M840.74 753.55 L844.64 757.15 L852.04 749.55" fill="none" stroke="#fff" stroke-width="1.2" stroke-linejoin="miter" stroke-linecap="butt"/><path d="M914.82 753.55 L918.72 757.15 L926.12 749.55" fill="none" stroke="#fff" stroke-width="1.2" stroke-linejoin="miter" stroke-linecap="butt"/><path d="M988.90 753.55 L992.80 757.15 L1000.20 749.55" fill="none" stroke="#fff" stroke-width="1.2" stroke-linejoin="miter" stroke-linecap="butt"/><path d="M1137.06 753.55 L1140.96 757.15 L1148.36 749.55" fill="none" stroke="#fff" stroke-width="1.2" stroke-linejoin="miter" stroke-linecap="butt"/><path d="M1285.22 753.55 L1289.12 757.15 L1296.52 749.55" fill="none" stroke="#fff" stroke-width="1.2" stroke-linejoin="miter" stroke-linecap="butt"/><path d="M1359.30 753.55 L1363.20 757.15 L1370.60 749.55" fill="none" stroke="#fff" stroke-width="1.2" stroke-linejoin="miter" stroke-linecap="butt"/><circle cx="1512.50" cy="752.05" r="6.25" fill="none" stroke="#1e293b" stroke-width="1.15"/><path d="M1512.50 748.45 V755.95 M1509.00 752.05 H1515.90" fill="none" stroke="#1e293b" stroke-width="1.0" stroke-linejoin="round" stroke-linecap="butt"/><path transform="translate(1838.00 741.05)" d="M6.2 9.4 H19.7 M9.5 9.4 V7.6 A1.2 1.2 0 0 1 10.7 6.4 H15.3 A1.2 1.2 0 0 1 16.5 7.6 V9.4 M7.9 9.4 V17.8 A1.2 1.2 0 0 0 9.1 19 H16.9 A1.2 1.2 0 0 0 18.1 17.8 V9.4 M11.4 12 V16.8 M14.5 12 V16.8" fill="none" stroke="#ef4444" stroke-width="1.3" stroke-linejoin="round" stroke-linecap="butt"/><circle cx="1512.50" cy="791.55" r="6.25" fill="none" stroke="#1e293b" stroke-width="1.15"/><path d="M1512.50 787.95 V795.45 M1509.00 791.55 H1515.90" fill="none" stroke="#1e293b" stroke-width="1.0" stroke-linejoin="round" stroke-linecap="butt"/><path transform="translate(1838.00 780.55)" d="M6.2 9.4 H19.7 M9.5 9.4 V7.6 A1.2 1.2 0 0 1 10.7 6.4 H15.3 A1.2 1.2 0 0 1 16.5 7.6 V9.4 M7.9 9.4 V17.8 A1.2 1.2 0 0 0 9.1 19 H16.9 A1.2 1.2 0 0 0 18.1 17.8 V9.4 M11.4 12 V16.8 M14.5 12 V16.8" fill="none" stroke="#ef4444" stroke-width="1.3" stroke-linejoin="round" stroke-linecap="butt"/><path d="M618.50 834.55 L622.40 838.15 L629.80 830.55" fill="none" stroke="#fff" stroke-width="1.2" stroke-linejoin="miter" stroke-linecap="butt"/><path d="M692.58 834.55 L696.48 838.15 L703.88 830.55" fill="none" stroke="#fff" stroke-width="1.2" stroke-linejoin="miter" stroke-linecap="butt"/><path d="M766.66 834.55 L770.56 838.15 L777.96 830.55" fill="none" stroke="#fff" stroke-width="1.2" stroke-linejoin="miter" stroke-linecap="butt"/><path d="M1211.14 834.55 L1215.04 838.15 L1222.44 830.55" fill="none" stroke="#fff" stroke-width="1.2" stroke-linejoin="miter" stroke-linecap="butt"/><path d="M1359.30 834.55 L1363.20 838.15 L1370.60 830.55" fill="none" stroke="#fff" stroke-width="1.2" stroke-linejoin="miter" stroke-linecap="butt"/><path transform="translate(1500.00 821.40)" d="M9.4 5.9 H13 L16.6 9.5 V16.5 A1.3 1.3 0 0 1 15.3 17.8 H9.4 A1.3 1.3 0 0 1 8.1 16.5 V7.2 A1.3 1.3 0 0 1 9.4 5.9 Z M12.5 6 V9.5 H16.5 M9.9 14.3 L11.4 15.4 L14.6 12.3" fill="none" stroke="#f39c12" stroke-width="1.15" stroke-linejoin="round" stroke-linecap="round"/><path transform="translate(1838.00 822.05)" d="M6.2 9.4 H19.7 M9.5 9.4 V7.6 A1.2 1.2 0 0 1 10.7 6.4 H15.3 A1.2 1.2 0 0 1 16.5 7.6 V9.4 M7.9 9.4 V17.8 A1.2 1.2 0 0 0 9.1 19 H16.9 A1.2 1.2 0 0 0 18.1 17.8 V9.4 M11.4 12 V16.8 M14.5 12 V16.8" fill="none" stroke="#ef4444" stroke-width="1.3" stroke-linejoin="round" stroke-linecap="butt"/><path d="M1011.1 880.2 L1007.4 883.9 L1011.1 887.6 M1016.4 880.2 L1012.7 883.9 L1016.4 887.6" fill="none" stroke="#94a3b8" stroke-width="1.4" stroke-linejoin="round" stroke-linecap="round"/><path d="M1053.4 880.2 L1049.7 883.9 L1053.4 887.6" fill="none" stroke="#94a3b8" stroke-width="1.4" stroke-linejoin="round" stroke-linecap="round"/><path d="M1166.4 880.2 L1170 883.9 L1166.4 887.6" fill="none" stroke="#475569" stroke-width="1.4" stroke-linejoin="round" stroke-linecap="round"/><path d="M1202.2 880.2 L1205.8 883.9 L1202.2 887.6 M1207.6 880.2 L1211.2 883.9 L1207.6 887.6" fill="none" stroke="#475569" stroke-width="1.4" stroke-linejoin="round" stroke-linecap="round"/></svg>
<div class="t" style="left:1549.3px;top:11.6px;width:21.5px;text-align:center;font-size:11px;font-weight:bold;color:#fff;line-height:14px">0</div>
</body></html>
